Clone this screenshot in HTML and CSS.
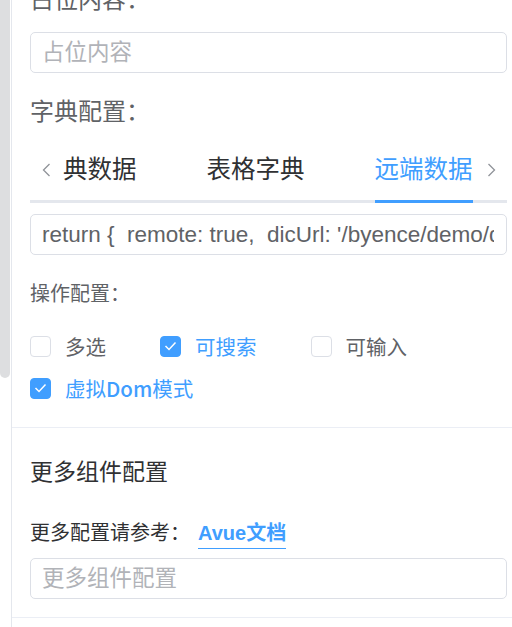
FILE: index.html
```html
<!DOCTYPE html>
<html lang="zh-CN">
<head>
<meta charset="utf-8">
<title>组件配置</title>
<link rel="stylesheet" href="styles.css">
</head>
<body>
<div class="scrollbar"><div class="thumb"></div></div>
<div class="panel">
  <div class="section section-main">
    <div class="group-label">占位内容：</div>
    <input class="field" type="text" placeholder="占位内容">

    <div class="group-label group-gap">字典配置：</div>
    <div class="tabs">
      <span class="tab-arrow tab-arrow-left">
        <svg width="9" height="14" viewBox="0 0 9 14"><polyline points="7.5,1 1.5,7 7.5,13" fill="none" stroke="#909399" stroke-width="1.3"/></svg>
      </span>
      <div class="tab-scroll">
        <div class="tab-list">
          <span class="tab">字典数据</span>
          <span class="tab">表格字典</span>
          <span class="tab tab-active">远端数据</span>
        </div>
      </div>
      <span class="tab-arrow tab-arrow-right">
        <svg width="9" height="14" viewBox="0 0 9 14"><polyline points="1.5,1 7.5,7 1.5,13" fill="none" stroke="#909399" stroke-width="1.3"/></svg>
      </span>
    </div>
    <div class="field field-code"><span class="field-value">return {  remote: true,  dicUrl: '/byence/demo/dict/list' }</span></div>

    <div class="form-label">操作配置：</div>
    <div class="checks">
      <label class="check"><span class="box"></span><span class="check-text">多选</span></label>
      <label class="check is-checked"><span class="box"><svg width="13" height="10" viewBox="0 0 13 10"><polyline points="1.5,5 5,8.5 11.5,1.5" fill="none" stroke="#fff" stroke-width="1.5"/></svg></span><span class="check-text">可搜索</span></label>
      <label class="check"><span class="box"></span><span class="check-text">可输入</span></label>
    </div>
    <div class="checks">
      <label class="check is-checked"><span class="box"><svg width="13" height="10" viewBox="0 0 13 10"><polyline points="1.5,5 5,8.5 11.5,1.5" fill="none" stroke="#fff" stroke-width="1.5"/></svg></span><span class="check-text">虚拟<span class="latin-strong">Dom</span>模式</span></label>
    </div>
  </div>

  <div class="section section-more">
    <div class="section-title">更多组件配置</div>
    <div class="doc-row">更多配置请参考：<a class="doc-link">Avue文档</a></div>
    <input class="field" type="text" placeholder="更多组件配置">
  </div>
</div>
</body>
</html>
```

FILE: styles.css
```css
* {
  box-sizing: border-box;
}

html,
body {
  margin: 0;
  height: 100%;
  overflow: hidden;
  background: #fff;
}

body {
  display: flex;
  align-items: flex-start;
  font-family: "Liberation Sans", "Noto Sans CJK SC", sans-serif;
  color: #606266;
}

.scrollbar {
  flex: none;
  width: 11px;
}

.thumb {
  width: 10px;
  height: 378px;
  background: #dddee0;
  border-radius: 0 0 5px 5px;
}

.panel {
  flex: 1;
  min-width: 0;
  min-height: 100%;
  border-left: 1px solid #e4e7ed;
}

.section {
  padding: 0 5px 0 18px;
  border-bottom: 1px solid #ebeef5;
}

.section-main {
  margin-top: -12px;
  padding-bottom: 18px;
}

.group-label {
  font-size: 24px;
  line-height: 24px;
  height: 24px;
  color: #606266;
  margin-bottom: 20px;
  white-space: nowrap;
}

.group-gap {
  margin-top: 27px;
  margin-bottom: 16px;
}

.field {
  display: block;
  width: 100%;
  height: 41px;
  margin: 0;
  padding: 0 11px;
  border: 1px solid #dcdfe6;
  border-radius: 5px;
  font-family: "Liberation Sans", "Noto Sans CJK SC", sans-serif;
  font-size: 22.5px;
  color: #606266;
  background: #fff;
  outline: none;
}

.field::placeholder {
  color: #b1b3b8;
}

.field-code {
  margin-top: 11px;
  display: flex;
  align-items: center;
  padding: 0 12px 0 11px;
  overflow: hidden;
}

.field-value {
  display: block;
  flex: 1;
  min-width: 0;
  overflow: hidden;
  white-space: pre;
  line-height: 39px;
}

.tabs {
  display: flex;
  height: 63px;
  box-shadow: inset 0 -3px 0 #e4e7ed;
}

.tab-arrow {
  flex: none;
  display: flex;
  align-items: center;
  height: 60px;
}

.tab-arrow-left {
  width: 33px;
  padding-left: 12px;
}

.tab-arrow-right {
  width: 27px;
  padding-left: 7px;
}

.tab-scroll {
  flex: 1;
  min-width: 0;
  overflow: hidden;
}

.tab-list {
  display: flex;
  gap: 70px;
  margin-left: -24.5px;
  white-space: nowrap;
}

.tab {
  flex: none;
  height: 63px;
  line-height: 60px;
  font-size: 24.5px;
  color: #303133;
}

.tab-active {
  color: #409eff;
  box-shadow: inset 0 -3px 0 #409eff;
}

.form-label {
  margin-top: 27px;
  font-size: 20px;
  line-height: 24px;
  color: #606266;
}

.checks {
  display: flex;
  gap: 54px;
  height: 42px;
  align-items: center;
}

.form-label + .checks {
  margin-top: 19px;
}

.check {
  display: flex;
  align-items: center;
  gap: 14px;
  font-size: 20.5px;
  color: #606266;
}

.latin-strong {
  font-family: "Noto Sans CJK SC", sans-serif;
  font-weight: 500;
}

.box {
  width: 21px;
  height: 21px;
  border: 1px solid #dcdfe6;
  border-radius: 4px;
  background: #fff;
  display: flex;
  align-items: center;
  justify-content: center;
}

.is-checked .box {
  background: #409eff;
  border-color: #409eff;
}

.is-checked .check-text {
  color: #409eff;
}

.section-more {
  padding-top: 29px;
  padding-bottom: 18px;
}

.section-title {
  font-size: 23px;
  line-height: 30px;
  color: #303133;
}

.doc-row {
  margin-top: 32px;
  height: 28px;
  font-size: 20px;
  line-height: 28px;
  color: #303133;
}

.doc-link {
  display: inline-block;
  margin-left: 8px;
  padding-bottom: 2px;
  line-height: 26px;
  color: #409eff;
  font-weight: 600;
  border-bottom: 1px solid #409eff;
}

.section-more .field {
  margin-top: 11px;
}
```
